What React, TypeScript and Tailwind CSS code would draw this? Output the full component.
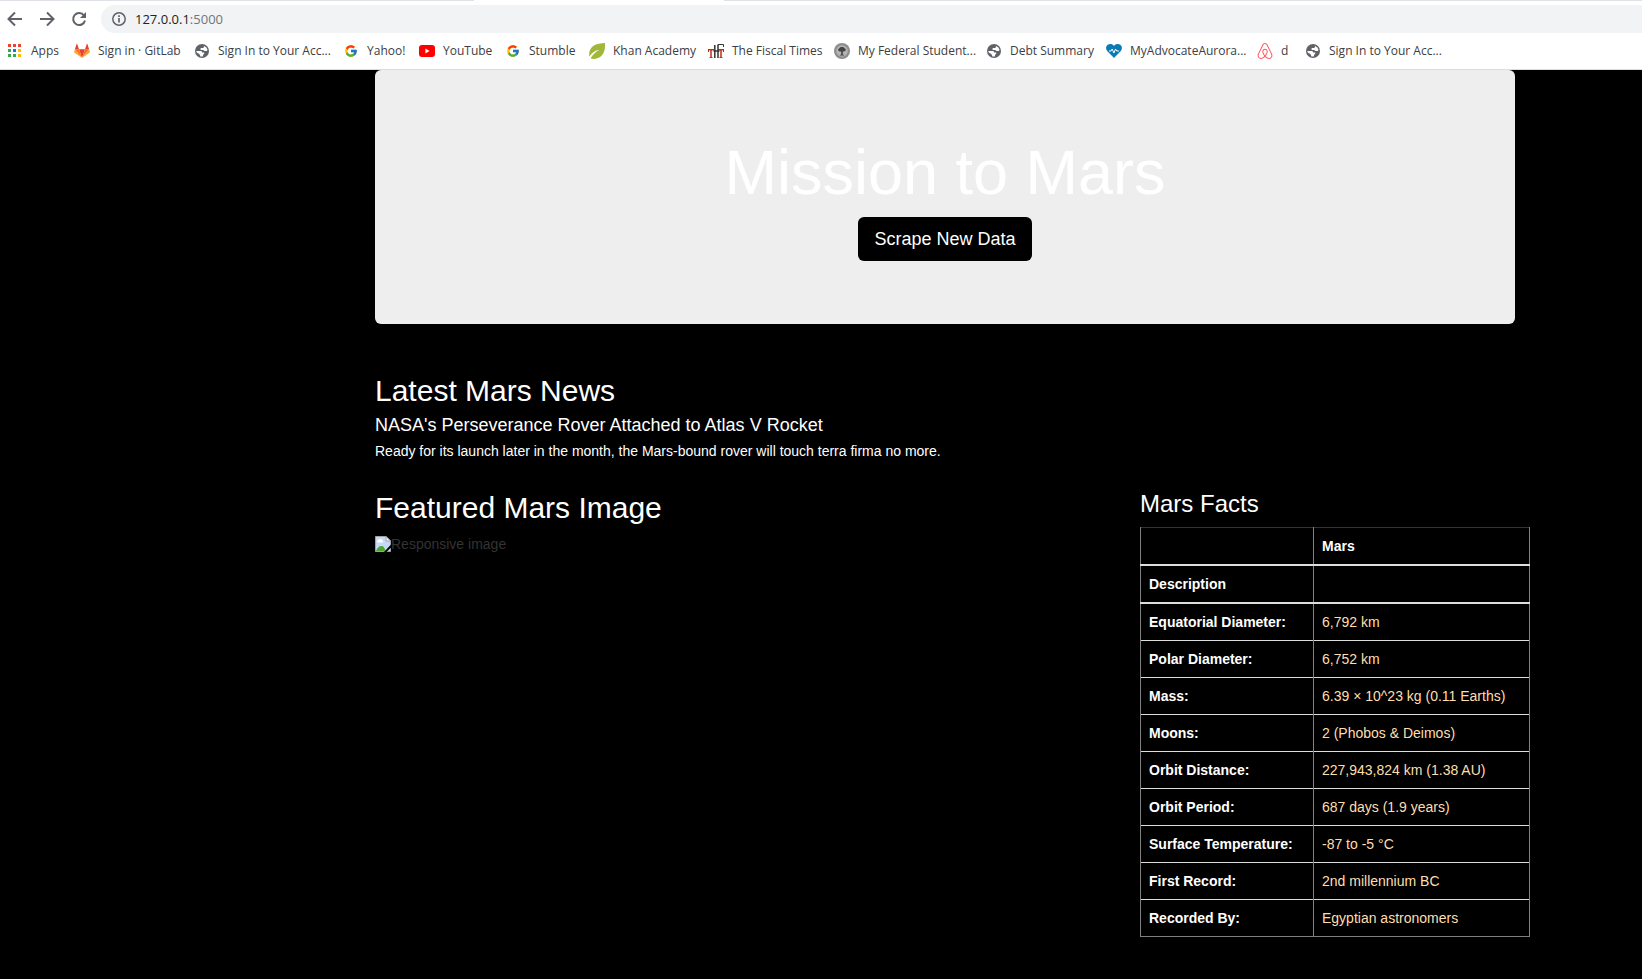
import type { ReactNode } from 'react'
import { FcGoogle } from 'react-icons/fc'
import { SiAirbnb } from 'react-icons/si'

const AppsIcon = () => (
  <svg width="16" height="16" viewBox="0 0 16 16" shapeRendering="crispEdges">
    <path fill="#ea4335" d="M1 1h3v3H1zM6 1h3v3H6zM11 1h3v3h-3z" />
    <path fill="#34a853" d="M1 6h3v3H1zM1 11h3v3H1z" />
    <path fill="#1a73e8" d="M6 6h3v3H6z" />
    <path fill="#fbbc04" d="M11 6h3v3h-3zM11 11h3v3h-3z" />
    <path fill="#34a853" d="M6 11h3v3H6z" />
  </svg>
)

const GitLabIcon = () => (
  <svg width="16" height="16" viewBox="0 0 16 16">
    <path fill="#e24329" d="M8 15 5 6.200h6z" />
    <path fill="#fc6d26" d="M8 15 5 6.200H.9zM8 15l3-8.800h4.100z" />
    <path fill="#fca326" d="M.9 6.200.1 8.900c-.1.300 0 .600.200.7L8 15zM15.100 6.200l.8 2.700c.1.300 0 .600-.2.700L8 15z" />
    <path fill="#e24329" d="M.9 6.200H5L3.200 1c-.1-.3-.5-.3-.6 0zM15.100 6.200H11L12.800 1c.1-.3.500-.3.600 0z" />
  </svg>
)

const GlobeIcon = () => (
  <svg width="16" height="16" viewBox="0 0 16 16">
    <circle cx="8" cy="8" r="7" fill="#5f6368" />
    <path fill="#fff" d="M2.300 8h4.200c1.200 0 1.500.7 1.500 1.500h2.200v1.400c-.8.200-1.200.6-1.200 1.200v1.200c-1 .3-2 .2-2.900-.1v-1.600c-.9 0-1.500-.5-1.500-1.300C3.600 10.300 2.300 9.500 2.300 8zM10 2.900l2.400 1.500 1.200 2.500-.9 1.100h-2c-.7 0-1.100-.5-1.100-1.100H7.300c-.5 0-.9-.4-.9-.9 0-.6.400-1 .9-1h1.500c.7 0 1.200-1 1.200-2.100z" />
  </svg>
)

const GoogleIcon = () => <FcGoogle size={14} />

const YouTubeIcon = () => (
  <svg width="16" height="16" viewBox="0 0 16 16">
    <rect y="2" width="16" height="12" rx="3" fill="#f00" />
    <path fill="#fff" d="M6.400 5.600v4.800L10.500 8z" />
  </svg>
)

const LeafIcon = () => (
  <svg width="16" height="16" viewBox="0 0 16 16">
    <path fill="#a1b73a" d="M16 0c.2 5-.3 9.500-3.500 12.800C9.700 15.700 5 16.500 1.500 15.500c2.500-4.500 5.500-7 9-8.800C6 7.500 3 9.700.3 13.500-.3 9 1 5.300 4.500 2.800 7.500.6 12 .2 16 0z" />
  </svg>
)

const FiscalIcon = () => (
  <svg width="16" height="16" viewBox="0 0 16 16" fill="none">
    <path stroke="#c0311a" strokeWidth="1.500" d="M0 6.800h6M3 7v7.500M10 6.800h6M13 7v7.500" />
    <path stroke="#c0311a" d="M1.500 14.500h3M11.500 14.500h3M.5 6v3M15.500 6v3" />
    <path stroke="#333" strokeWidth="1.500" d="M6.800 2v13M10 1.500v13.500M5.500 8h6" />
    <path stroke="#333" d="M10 1.500h5.500v2.500" />
  </svg>
)

const SealIcon = () => (
  <svg width="16" height="16" viewBox="0 0 16 16">
    <circle cx="8" cy="8" r="8" fill="#8d8d8d" />
    <circle cx="8" cy="8" r="5.800" fill="#b5b5b5" />
    <path fill="#444" d="M8 4c1.300 0 2.100.4 2.600 1.200 1.200.3 1.500 1.800.8 2.600-.6.700-1.700.9-2.600.6v2.900l1.700 1.200h-5L7.200 11.300V8.400c-1.200.3-2.300 0-2.800-.7-.6-.9-.1-2.200.9-2.500C5.800 4.400 6.700 4 8 4z" />
  </svg>
)

const HeartIcon = () => (
  <svg width="16" height="16" viewBox="0 0 16 16">
    <path fill="#0b7bb5" d="M8 15 1.400 8.300C-.4 6.300-.3 3.600 1.400 2.100 3.300.5 6.400.7 8 3c1.600-2.300 4.700-2.500 6.600-.9 1.700 1.500 1.800 4.200 0 6.200z" />
    <path fill="none" stroke="#fff" d="M3 8h2l1.200-2 1.700 4L9.500 6l1.200 2H13" />
  </svg>
)

const AirbnbIcon = () => <SiAirbnb size={16} color="#ff5a5f" />

type Bookmark = { label: string; icon: ReactNode; width: string }

const bookmarks: Bookmark[] = [
  { label: 'Apps', icon: <AppsIcon />, width: 'w-[67px]' },
  { label: 'Sign in · GitLab', icon: <GitLabIcon />, width: 'w-[120px]' },
  { label: 'Sign In to Your Acc...', icon: <GlobeIcon />, width: 'w-[149px]' },
  { label: 'Yahoo!', icon: <GoogleIcon />, width: 'w-[76px]' },
  { label: 'YouTube', icon: <YouTubeIcon />, width: 'w-[86px]' },
  { label: 'Stumble', icon: <GoogleIcon />, width: 'w-[84px]' },
  { label: 'Khan Academy', icon: <LeafIcon />, width: 'w-[119px]' },
  { label: 'The Fiscal Times', icon: <FiscalIcon />, width: 'w-[126px]' },
  { label: 'My Federal Student...', icon: <SealIcon />, width: 'w-[152px]' },
  { label: 'Debt Summary', icon: <GlobeIcon />, width: 'w-[120px]' },
  { label: 'MyAdvocateAurora...', icon: <HeartIcon />, width: 'w-[151px]' },
  { label: 'd', icon: <AirbnbIcon />, width: 'w-[48px]' },
  { label: 'Sign In to Your Acc...', icon: <GlobeIcon />, width: 'w-[149px]' },
]

const facts = [
  ['Equatorial Diameter:', '6,792 km'],
  ['Polar Diameter:', '6,752 km'],
  ['Mass:', '6.39 × 10^23 kg (0.11 Earths)'],
  ['Moons:', '2 (Phobos & Deimos)'],
  ['Orbit Distance:', '227,943,824 km (1.38 AU)'],
  ['Orbit Period:', '687 days (1.9 years)'],
  ['Surface Temperature:', '-87 to -5 °C'],
  ['First Record:', '2nd millennium BC'],
  ['Recorded By:', 'Egyptian astronomers'],
]

function NavButton({ label, children }: { label: string; children: ReactNode }) {
  return (
    <button type="button" aria-label={label} className="flex size-4 items-center justify-center">
      <svg width="16" height="16" viewBox="0 0 16 16" fill="none" stroke="#5f6368" strokeWidth="2">
        {children}
      </svg>
    </button>
  )
}

function BrowserBar() {
  return (
    <header className="border-b border-[#dcdcdc] bg-white font-['Open_Sans',sans-serif]">
      <div className="flex h-px">
        <div className="w-[474px] bg-[#dee1e6]" />
        <div className="w-[250px]" />
        <div className="flex-1 bg-[#dee1e6]" />
      </div>
      <div className="flex items-center pt-1 pl-[7px]">
        <div className="flex gap-4">
          <NavButton label="Back">
            <path d="M15 8H2M8 1.500 1.500 8 8 14.500" />
          </NavButton>
          <NavButton label="Forward">
            <path d="M1 8h13M8 1.500 14.500 8 8 14.500" />
          </NavButton>
          <NavButton label="Reload">
            <path d="M13 4.500A6 6 0 1 0 14 9.500" />
            <path fill="#5f6368" stroke="none" d="M15 1v6H9z" />
          </NavButton>
        </div>
        <div className="ml-[14px] flex h-7 flex-1 items-center gap-[9px] rounded-l-full bg-[#f1f3f4] pl-[11px]">
          <svg width="14" height="14" viewBox="0 0 14 14" fill="none" stroke="#5f6368">
            <circle cx="7" cy="7" r="6.200" strokeWidth="1.500" />
            <path strokeWidth="1.700" d="M7 6v4.500M7 3.300V5" />
          </svg>
          <p className="text-[13px] leading-5 text-[#202124]">
            127.0.0.1<span className="text-[#70757a]">:5000</span>
          </p>
        </div>
      </div>
      <nav className="flex h-9 items-center overflow-hidden pl-[7px]">
        {bookmarks.map((b, i) => (
          <a key={i} href="#" className={`flex shrink-0 items-center gap-2 ${b.width}`}>
            <span className="flex size-4 shrink-0 items-center justify-center">{b.icon}</span>
            <span className="text-[12px] leading-4 whitespace-nowrap text-[#3c4043]">{b.label}</span>
          </a>
        ))}
      </nav>
    </header>
  )
}

function BrokenImage() {
  return (
    <div className="flex h-5 items-center text-[14px] text-[#333]">
      <svg width="16" height="16" viewBox="0 0 16 16">
        <path fill="#c6d9f8" stroke="#a0a0a0" d="M.5.5H11L15.500 5v10.500H.5z" />
        <path fill="#fff" stroke="#a0a0a0" d="M11 .5V5h4.500z" />
        <path fill="#fff" d="M3 6.500a1.500 1.500 0 0 1 1-2.800 2 2 0 0 1 3.500.7A1.200 1.200 0 0 1 7.500 6.500z" />
        <path fill="#4ca82f" d="M1 15c1-3 3-5 5.500-5 2 0 3 1.500 4 5z" />
        <path fill="#000" d="M16 8.500 9 16h2.500L16 11.500z" />
      </svg>
      <span>Responsive image</span>
    </div>
  )
}

function FactsTable() {
  const head = 'border-x border-[#808080] p-2 text-left font-bold text-white'
  return (
    <table className="w-full border-collapse border border-[#808080] text-[14px] leading-5">
      <thead>
        <tr className="border-t border-b-2 border-t-[#333] border-b-[#ddd]">
          <th className={`w-[173px] ${head}`} />
          <th className={head}>Mars</th>
        </tr>
        <tr className="border-b-2 border-b-[#ddd]">
          <th className={head}>Description</th>
          <th className={head} />
        </tr>
      </thead>
      <tbody>
        {facts.map(([name, value]) => (
          <tr key={name} className="border-b border-b-[#ddd] last:border-b-[#808080]">
            <th scope="row" className={`whitespace-nowrap ${head}`}>{name}</th>
            <td className="border-x border-[#808080] p-2 text-[#ffdead]">{value}</td>
          </tr>
        ))}
      </tbody>
    </table>
  )
}

export default function App() {
  return (
    <div className="min-h-screen bg-black font-['Liberation_Sans',Arial,sans-serif] text-white">
      <BrowserBar />
      <main className="pr-[112px] pb-10 pl-[375px]">
        <section className="mr-[15px] flex flex-col items-center rounded-md bg-[#eee] pt-[68px] pb-[63px]">
          <h1 className="text-[63px] leading-[69px]">Mission to Mars</h1>
          <button type="button" className="mt-[10px] rounded-md bg-black px-4 py-[10px] text-[18px] leading-6">
            Scrape New Data
          </button>
        </section>
        <section className="mt-[50px]">
          <h2 className="text-[30px] leading-[33px]">Latest Mars News</h2>
          <h4 className="mt-2 text-[18px] leading-5">NASA's Perseverance Rover Attached to Atlas V Rocket</h4>
          <p className="mt-[6px] text-[14px] leading-5">
            Ready for its launch later in the month, the Mars-bound rover will touch terra firma no more.
          </p>
        </section>
        <div className="mt-[30px] flex justify-between">
          <section>
            <h2 className="text-[30px] leading-[33px]">Featured Mars Image</h2>
            <div className="mt-[10px]">
              <BrokenImage />
            </div>
          </section>
          <section className="w-[390px]">
            <h3 className="mb-[10px] text-[24px] leading-[26px]">Mars Facts</h3>
            <FactsTable />
          </section>
        </div>
      </main>
    </div>
  )
}
